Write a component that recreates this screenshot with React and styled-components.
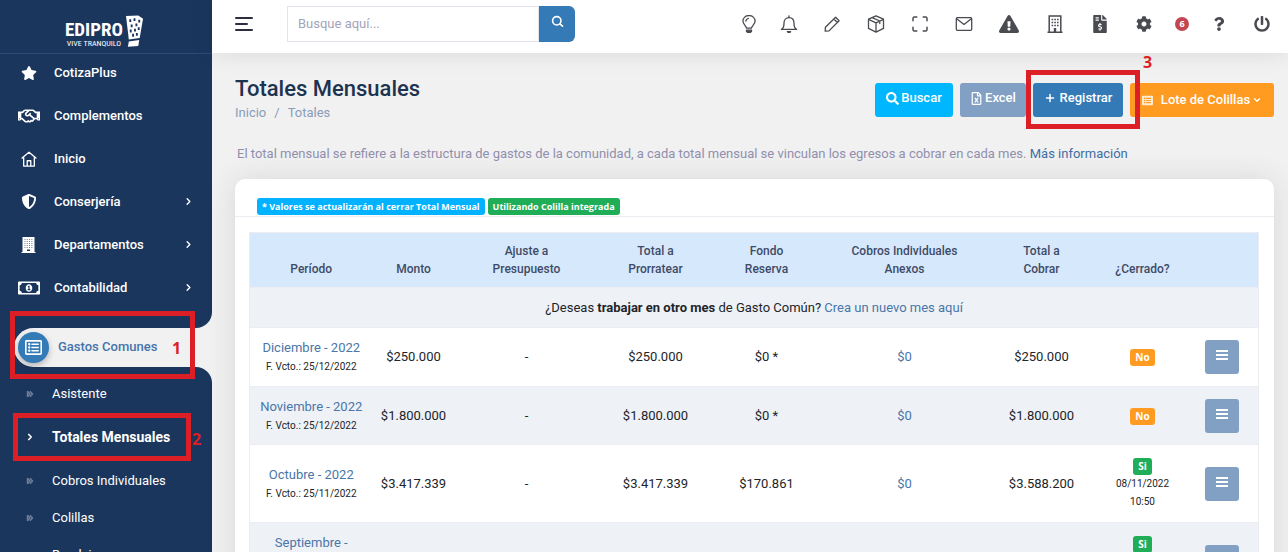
import React from 'react';
import styled, { createGlobalStyle, css } from 'styled-components';
import {
  FaStar, FaRegHandshake, FaShieldAlt, FaRegMoneyBillAlt, FaRegListAlt, FaListAlt,
  FaExclamationTriangle, FaFileInvoiceDollar, FaCog, FaQuestion,
  FaPowerOff, FaSearch, FaRegFileExcel,
} from 'react-icons/fa';
import { FiChevronRight, FiChevronDown, FiPlus } from 'react-icons/fi';

const navy = '#1b365d';
const blue = '#337ab7';
const page = '#f1f1f1';
const red = '#dc1f26';

const GlobalStyle = createGlobalStyle`
  *, *::before, *::after { box-sizing: border-box; }
  body {
    margin: 0;
    background: ${page};
    color: #212529;
    font: 400 13px/18px Roboto, "Liberation Sans", sans-serif;
  }
  a { color: #4a76a8; text-decoration: none; }
  button, input { font: inherit; }
  ul, ol { list-style: none; margin: 0; padding: 0; }
`;

const Shell = styled.div`
  display: flex;
  height: 100vh;
  overflow: hidden;
`;

/* Sidebar */

const Sidebar = styled.aside`
  display: flex;
  flex-direction: column;
  flex: 0 0 212px;
`;

const Brand = styled.a`
  display: flex;
  flex: 0 0 54px;
  align-items: flex-end;
  justify-content: center;
  gap: 3px;
  padding: 0 4px 5px 0;
  background: ${navy};
  border-bottom: 1px solid #2d4a74;
  color: #fff;
`;

const BrandText = styled.span`
  display: flex;
  flex-direction: column;
  align-items: center;
  font-family: "Roboto Condensed", "Liberation Sans Narrow", "DejaVu Sans Condensed", sans-serif;
  font-weight: 700;
`;

const BrandName = styled.span`
  font-size: 19px;
  line-height: 20px;
`;

const BrandTag = styled.span`
  font-size: 8px;
  font-weight: 400;
  line-height: 8px;
`;

const NavList = styled.ul`
  flex: none;
  padding-bottom: 16px;
  background: ${navy};
  border-bottom-right-radius: 16px;
`;

const NavLink = styled.a`
  display: flex;
  align-items: center;
  height: 43px;
  padding: 0 18px 6px;
  color: #fff;
  font-weight: 500;

  > svg:first-child { flex: 0 0 22px; margin-right: 14px; }
  > span { flex: 1; }
`;

const ActiveRow = styled.div`
  position: relative;
  flex: none;
  padding-left: 14px;
  background: linear-gradient(to right, ${navy} 40px, ${page} 40px);
`;

const ActivePill = styled.a`
  display: flex;
  align-items: center;
  gap: 9px;
  height: 39px;
  padding: 0 18px 1px 4px;
  border-radius: 20px 0 0 20px;
  background: ${page};
  color: #4474ad;
  font-weight: 500;

  > span:nth-child(2) { flex: 1; }
`;

const ActiveIcon = styled.span`
  display: grid;
  place-items: center;
  width: 31px;
  height: 31px;
  border-radius: 50%;
  background: ${blue};
  color: #fff;
  box-shadow: 0 3px 6px rgba(0, 0, 0, 0.25);
`;

const SubList = styled.ul`
  flex: 1 0 auto;
  padding-top: 8px;
  background: ${navy};
  border-top-right-radius: 16px;
`;

const SubItem = styled.li`
  position: relative;
`;

const SubLink = styled.a`
  display: flex;
  align-items: center;
  gap: 16px;
  height: ${(p) => (p.$active ? 50 : 37)}px;
  padding-left: 24px;
  color: #fff;
  font-size: ${(p) => (p.$active ? 14 : 13)}px;
  font-weight: ${(p) => (p.$active ? 700 : 400)};

  svg { flex: 0 0 12px; opacity: ${(p) => (p.$active ? 1 : 0.35)}; }
`;

/* Numbered marks that guide the reader through the steps */

const Mark = styled.span`
  position: absolute;
  z-index: 2;
  border: 5px solid ${red};
  pointer-events: none;
  ${(p) => css`inset: ${p.$inset};`}
`;

const Step = styled.span`
  position: absolute;
  z-index: 2;
  color: ${red};
  font: 700 16px/18px "Open Sans", sans-serif;
  ${(p) => css`inset: ${p.$inset};`}
`;

/* Top bar */

const Main = styled.div`
  display: flex;
  flex: 1;
  flex-direction: column;
  min-width: 0;
`;

const TopBar = styled.header`
  display: flex;
  flex: 0 0 53px;
  align-items: flex-start;
  justify-content: space-between;
  padding: 6px 4px 0 23px;
  background: #fff;
  box-shadow: 0 0 24px rgba(0, 0, 0, 0.1);
`;

const TopLeft = styled.div`
  display: flex;
  align-items: center;
  gap: 34px;
`;

const PlainButton = styled.button`
  display: grid;
  place-items: center;
  padding: 0;
  border: 0;
  background: none;
  color: inherit;
  cursor: pointer;
`;

const Search = styled.form`
  display: flex;
  height: 36px;
`;

const SearchInput = styled.input`
  width: 252px;
  padding: 0 10px;
  border: 1px solid #e2e5ec;
  outline: 0;
  &::placeholder { color: #a3a5b8; opacity: 1; }
`;

const SearchButton = styled.button`
  width: 36px;
  padding: 0 0 5px;
  border: 0;
  border-radius: 0 6px 6px 0;
  background: ${blue};
  color: #fff;
  display: grid;
  place-items: center;
`;

const Tools = styled.nav`
  display: flex;
  height: 36px;
  color: #494b50;
`;

const Tool = styled(PlainButton)`
  width: ${(p) => p.$width || 44}px;
`;

const Count = styled.span`
  display: grid;
  place-items: center;
  width: 14px;
  height: 14px;
  border-radius: 50%;
  background: #c34653;
  color: #fff;
  font: 700 9px/14px "Open Sans", sans-serif;
`;

/* Content */

const Content = styled.main`
  flex: 1 0 auto;
  padding: 24px 14px 0 23px;
`;

const PageHead = styled.div`
  display: flex;
  justify-content: space-between;
  align-items: flex-start;
`;

const Title = styled.h1`
  margin: 0;
  color: #1e3350;
  font-size: 22px;
  font-weight: 500;
  line-height: 24px;
`;

const Crumbs = styled.ol`
  display: flex;
  gap: 8px;
  padding-top: 3px;
  line-height: 18px;
  color: #8b9cb8;
  a { color: inherit; }
`;

const Actions = styled.div`
  display: flex;
  gap: 7px;
  padding-top: 6px;
`;

const tones = { cyan: '#00b7ff', steel: '#82a0c4', blue, orange: '#ff9b21' };

const Action = styled.button`
  display: flex;
  align-items: center;
  justify-content: center;
  gap: ${(p) => p.$gap || 2}px;
  width: ${(p) => p.$width}px;
  height: 34px;
  padding: 0 0 ${(p) => (p.$tone === 'orange' ? 0 : 4)}px;
  border: 0;
  border-radius: 3px;
  background: ${(p) => tones[p.$tone]};
  color: #fff;
  font-weight: 500;
  white-space: nowrap;
`;

const LotIcon = styled(FaListAlt).attrs({ size: 11 })`
  margin-right: 6px;
  opacity: 0.8;
`;

const MarkedAction = styled.div`
  position: relative;
`;

const Intro = styled.p`
  margin: 22px 2px 15px;
  line-height: 20px;
  color: #918fae;
  a { color: #3f6ea5; }
`;

const Card = styled.section`
  border-radius: 10px 10px 0 0;
  background: #fff;
  box-shadow: 0 0 30px rgba(50, 40, 45, 0.12);
`;

const CardHead = styled.div`
  display: flex;
  align-items: flex-end;
  gap: 3px;
  height: 38px;
  padding: 0 22px 1px;
  border-bottom: 1px solid #ebedf2;
`;

const labelTones = { cyan: '#00b2ff', green: '#1fad58', orange: '#ff9b21' };

const Label = styled.span`
  display: inline-block;
  padding: 0 5px;
  border-radius: 3px;
  background: ${(p) => labelTones[p.$tone]};
  color: #fff;
  font: 700 ${(p) => (p.$status ? 10 : 9)}px/17px "Open Sans", sans-serif;
  white-space: nowrap;
`;

const TableWrap = styled.div`
  padding: 15px 16px 0 14px;
`;

const Table = styled.table`
  width: 100%;
  table-layout: fixed;
  border: 1px solid #ebedf2;
  border-collapse: collapse;
  text-align: center;

  th {
    height: 55px;
    padding: 0 4px 9px;
    background: #d6e8fc;
    color: #3f4b66;
    font-size: 12px;
    font-weight: 500;
    line-height: 18px;
    vertical-align: bottom;
  }
  td { padding: 0; vertical-align: middle; }
  td:last-child:not(:first-child) { padding-right: 4px; }
`;

const Row = styled.tr`
  height: ${(p) => p.$height}px;
  border-top: 1px solid #ebedf2;
  background: ${(p) => (p.$shade ? '#eef1f6' : '#fff')};
`;

const Period = styled.a`
  display: block;
  line-height: 20px;
`;

const Small = styled.span`
  display: block;
  font-size: 10px;
  line-height: 18px;
`;

const RowButton = styled(PlainButton)`
  width: 34px;
  height: 34px;
  margin: 0 auto;
  padding-bottom: 4px;
  border-radius: 3px;
  background: #82a0c4;
  color: #fff;
`;

/* Icons */

const Line = ({ size = 18, children, width = 1.3 }) => (
  <svg width={size} height={size} viewBox="0 0 18 18" fill="none" stroke="currentColor"
    strokeWidth={width} strokeLinecap="round" strokeLinejoin="round" aria-hidden="true">
    {children}
  </svg>
);

const BulbIcon = () => (
  <Line>
    <path d="M6.5 13.2c0-2.4-3.6-3.6-3.6-7.1a6.1 5.6 0 0 1 12.2 0c0 3.5-3.6 4.7-3.6 7.1z" />
    <path d="M5.8 6.2c.2-1.5 1.1-2.6 2.6-2.9" />
    <path d="M6.5 15.2h5v1.2l-1 1h-3l-1-1z" fill="currentColor" />
  </Line>
);
const BellIcon = () => (
  <Line>
    <path d="M1.4 14.4c2-1 2.6-2.6 2.6-6.1C4 4.8 6 2.6 9 2.6s5 2.2 5 5.7c0 3.5.6 5.1 2.6 6.1z" />
    <path d="M9 .8v1.6" />
    <path d="M7.4 16.6h3.2l-.8 1H8.2z" fill="currentColor" />
  </Line>
);
const PencilIcon = () => (
  <Line><path d="M2.2 16.2l.2-3.9L12.6 2.2l3.5 3.5L6 15.9zM10.8 4l3.5 3.5" /></Line>
);
const BoxIcon = () => (
  <Line>
    <path d="M9 .9l7.5 3.3v9.2L9 17.2l-7.5-3.8V4.2zM1.5 4.4L9 7.8l7.5-3.4M9 7.8v9.4M5.2 2.6l7.6 3.4v2.6" />
  </Line>
);
const ExpandIcon = () => (
  <Line width={1.5}>
    <path d="M2 5.8V3.5Q2 2 3.5 2h2.3M12.2 2h2.3Q16 2 16 3.5v2.3M16 12.2v2.3q0 1.5-1.5 1.5h-2.3M5.8 16H3.5Q2 16 2 14.5v-2.3" />
  </Line>
);
const MailIcon = () => (
  <Line><rect x="1.3" y="2.7" width="15.4" height="12.6" rx="1" /><path d="M2 4l7 5.4L16 4" /></Line>
);
const OfficeIcon = () => (
  <svg width="16" height="18" viewBox="0 0 16 18" fill="none" stroke="currentColor" aria-hidden="true">
    <path d="M2.2 17V1h11.6v16M.5 17.2h15" strokeWidth="1.5" />
    <path d="M4.6 4.5h7.4M4.6 7.5h7.4M4.6 10.5h7.4" strokeWidth="1.6" strokeDasharray="1.600 1.100" />
    <path d="M6.8 13h2.4v4H6.8z" fill="currentColor" stroke="none" />
  </svg>
);
const MenuIcon = () => (
  <svg width="18" height="14" viewBox="0 0 18 14" fill="none" stroke="#2b2d42" strokeWidth="2" strokeLinecap="round" aria-hidden="true">
    <path d="M1 1h16M1 7h11M1 13h16" />
  </svg>
);
const LensIcon = () => (
  <Line size={13} width={2.2}><circle cx="8" cy="8" r="5.8" /><path d="M12.3 12.3L16 15.5" /></Line>
);
const HomeIcon = () => (
  <Line size={16} width={1.5}>
    <path d="M1.2 8L9 1.4 16.8 8M3 7v10h12V7M7 17v-6h4v6" />
  </Line>
);
const TowerIcon = () => (
  <svg width="16" height="16" viewBox="0 0 16 16" aria-hidden="true">
    <path d="M1.5 0h12v15h1v1h-14v-1h1z" fill="#fff" />
    <path d="M3.5 2.5h8M3.5 4.5h8M3.5 6.5h8M3.5 8.5h8M3.5 10.5h8" stroke={navy} strokeWidth=".7" strokeDasharray=".9 1.4" />
    <path d="M6 12.5h3V14H6z" fill={navy} />
  </svg>
);
const DoubleArrow = () => (
  <svg width="12" height="8" viewBox="0 0 12 8" fill="none" stroke="currentColor" strokeWidth="1.5" aria-hidden="true">
    <path d="M3.5 1v6M3.5 1.2L6 4 3.5 6.8M6 1.2L8.5 4 6 6.8" />
  </svg>
);
const BarsIcon = () => (
  <svg width="12" height="10" viewBox="0 0 12 10" aria-hidden="true">
    <path d="M0 0h12v2H0zM0 4h12v2H0zM0 8h12v2H0z" fill="currentColor" />
  </svg>
);
const TowerLogo = () => (
  <svg width="17" height="34" viewBox="0 0 18 34" aria-hidden="true">
    <path d="M0 1L13 .5l5 3.5-3.5 20.5L3 26z" fill="#fff" />
    <path d="M3 28l11-1.5-1 6.5-11 .8z" fill="#fff" />
    <path d="M3.5 4.5h2v3h-2zM8 3.5h2v3H8zM13 5h2v3h-2zM5 10h2v3H5zM10 9h2v3h-2zM4 15.5h2v3H4zM8.5 14.5h2v3h-2zM12.5 13h2v3h-2zM6.5 20h2v3h-2zM10.5 19h2v3h-2z" fill={navy} />
  </svg>
);

/* Data */

const menu = [
  { text: 'CotizaPlus', icon: <FaStar size={14} /> },
  { text: 'Complementos', icon: <FaRegHandshake size={18} /> },
  { text: 'Inicio', icon: <HomeIcon /> },
  { text: 'Conserjería', icon: <FaShieldAlt size={15} />, more: true },
  { text: 'Departamentos', icon: <TowerIcon />, more: true },
  { text: 'Contabilidad', icon: <FaRegMoneyBillAlt size={18} />, more: true },
];

const submenu = ['Asistente', 'Totales Mensuales', 'Cobros Individuales', 'Colillas', 'Bandeja'];

const tools = [
  { name: 'Ideas', icon: <BulbIcon />, width: 38 },
  { name: 'Notificaciones', icon: <BellIcon />, width: 42 },
  { name: 'Editar', icon: <PencilIcon /> },
  { name: 'Paquetes', icon: <BoxIcon /> },
  { name: 'Pantalla completa', icon: <ExpandIcon /> },
  { name: 'Correo', icon: <MailIcon /> },
  { name: 'Alertas', icon: <FaExclamationTriangle size={20} />, width: 46 },
  { name: 'Comunidad', icon: <OfficeIcon />, width: 46 },
  { name: 'Facturas', icon: <FaFileInvoiceDollar size={18} /> },
  { name: 'Ajustes', icon: <FaCog size={16} /> },
  { name: 'Pendientes', icon: <Count>6</Count>, width: 32 },
  { name: 'Ayuda', icon: <FaQuestion size={14} />, width: 42 },
  { name: 'Salir', icon: <FaPowerOff size={16} /> },
];

const widths = [123, 82, 144, 114, 108, 168, 106, 96, 68];

const heads = [
  ['Período'], ['Monto'], ['Ajuste a', 'Presupuesto'], ['Total a', 'Prorratear'],
  ['Fondo', 'Reserva'], ['Cobros Individuales', 'Anexos'], ['Total a', 'Cobrar'], ['¿Cerrado?'], [],
];

const rows = [
  { period: ['Diciembre - 2022'], due: '25/12/2022', amount: '$250.000', fund: '$0 *', total: '$250.000', height: 59 },
  { period: ['Noviembre - 2022'], due: '25/12/2022', amount: '$1.800.000', fund: '$0 *', total: '$1.800.000', height: 58 },
  { period: ['Octubre - 2022'], due: '25/11/2022', amount: '$3.417.339', fund: '$170.861', total: '$3.588.200', closed: ['08/11/2022', '10:50'], height: 78 },
  { period: ['Septiembre -', '2022'], due: '25/10/2022', amount: '$3.250.400', fund: '$162.520', total: '$3.412.920', closed: ['07/10/2022', '11:20'], height: 78 },
];

export default function App() {
  return (
    <>
      <GlobalStyle />
      <Shell>
        <Sidebar>
          <Brand href="#">
            <BrandText>
              <BrandName>EDIPRO</BrandName>
              <BrandTag>VIVE TRANQUILO</BrandTag>
            </BrandText>
            <TowerLogo />
          </Brand>
          <NavList>
            {menu.map((m) => (
              <li key={m.text}>
                <NavLink href="#">
                  {m.icon}
                  <span>{m.text}</span>
                  {m.more && <FiChevronRight size={11} strokeWidth={3} />}
                </NavLink>
              </li>
            ))}
          </NavList>
          <ActiveRow>
            <ActivePill href="#">
              <ActiveIcon><FaRegListAlt size={17} /></ActiveIcon>
              <span>Gastos Comunes</span>
            </ActivePill>
            <Mark $inset="-17px 17px -12px 10px" />
            <Step $inset="11px auto auto 172px">1</Step>
          </ActiveRow>
          <SubList>
            {submenu.map((text, i) => (
              <SubItem key={text}>
                <SubLink href="#" $active={i === 1}>
                  {i === 1 ? <FiChevronRight size={10} strokeWidth={4} /> : <DoubleArrow />}
                  {text}
                </SubLink>
                {i === 1 && (
                  <>
                    <Mark $inset="1px 21px 1px 13px" />
                    <Step $inset="18px auto auto 192px">2</Step>
                  </>
                )}
              </SubItem>
            ))}
          </SubList>
        </Sidebar>

        <Main>
          <TopBar>
            <TopLeft>
              <PlainButton type="button" aria-label="Menú"><MenuIcon /></PlainButton>
              <Search onSubmit={(e) => e.preventDefault()}>
                <SearchInput type="text" placeholder="Busque aquí..." aria-label="Busque aquí" />
                <SearchButton aria-label="Buscar en el sitio"><LensIcon /></SearchButton>
              </Search>
            </TopLeft>
            <Tools>
              {tools.map((t) => (
                <Tool key={t.name} type="button" aria-label={t.name} $width={t.width}>{t.icon}</Tool>
              ))}
            </Tools>
          </TopBar>

          <Content>
            <PageHead>
              <div>
                <Title>Totales Mensuales</Title>
                <Crumbs>
                  <li><a href="#">Inicio</a></li>
                  <li aria-hidden="true">/</li>
                  <li><a href="#">Totales</a></li>
                </Crumbs>
              </div>
              <Actions>
                <Action type="button" $tone="cyan" $width={78}><FaSearch size={13} />Buscar</Action>
                <Action type="button" $tone="steel" $width={66}><FaRegFileExcel size={13} />Excel</Action>
                <MarkedAction>
                  <Action type="button" $tone="blue" $width={90} $gap={4}><FiPlus size={12} strokeWidth={3} />Registrar</Action>
                  <Mark $inset="-13px -17px -12px -7px" />
                  <Step $inset="-30px auto auto 110px">3</Step>
                </MarkedAction>
                <Action type="button" $tone="orange" $width={144} $gap={2}>
                  <LotIcon />Lote de Colillas<FiChevronDown size={10} strokeWidth={3} />
                </Action>
              </Actions>
            </PageHead>

            <Intro>
              El total mensual se refiere a la estructura de gastos de la comunidad, a cada total mensual se
              vinculan los egresos a cobrar en cada mes. <a href="#">Más información</a>
            </Intro>

            <Card>
              <CardHead>
                <Label $tone="cyan">* Valores se actualizarán al cerrar Total Mensual</Label>
                <Label $tone="green">Utilizando Colilla integrada</Label>
              </CardHead>
              <TableWrap>
                <Table>
                  <colgroup>
                    {widths.map((w, i) => <col key={i} width={w} />)}
                  </colgroup>
                  <thead>
                    <tr>
                      {heads.map((lines, i) => (
                        <th key={i} scope="col">{lines.map((l) => <div key={l}>{l}</div>)}</th>
                      ))}
                    </tr>
                  </thead>
                  <tbody>
                    <Row $height={40} $shade>
                      <td colSpan={9}>
                        ¿Deseas <b>trabajar en otro mes</b> de Gasto Común? <a href="#">Crea un nuevo mes aquí</a>
                      </td>
                    </Row>
                    {rows.map((r, i) => (
                      <Row key={r.period[0]} $height={r.height} $shade={i % 2 === 1}>
                        <td>
                          <Period href="#">{r.period.map((l) => <div key={l}>{l}</div>)}</Period>
                          <Small>F. Vcto.: {r.due}</Small>
                        </td>
                        <td>{r.amount}</td>
                        <td>-</td>
                        <td>{r.amount}</td>
                        <td>{r.fund}</td>
                        <td><a href="#">$0</a></td>
                        <td>{r.total}</td>
                        <td>
                          <Label $status $tone={r.closed ? 'green' : 'orange'}>{r.closed ? 'Si' : 'No'}</Label>
                          {r.closed && r.closed.map((l) => <Small key={l}>{l}</Small>)}
                        </td>
                        <td><RowButton type="button" aria-label="Opciones"><BarsIcon /></RowButton></td>
                      </Row>
                    ))}
                  </tbody>
                </Table>
              </TableWrap>
            </Card>
          </Content>
        </Main>
      </Shell>
    </>
  );
}
